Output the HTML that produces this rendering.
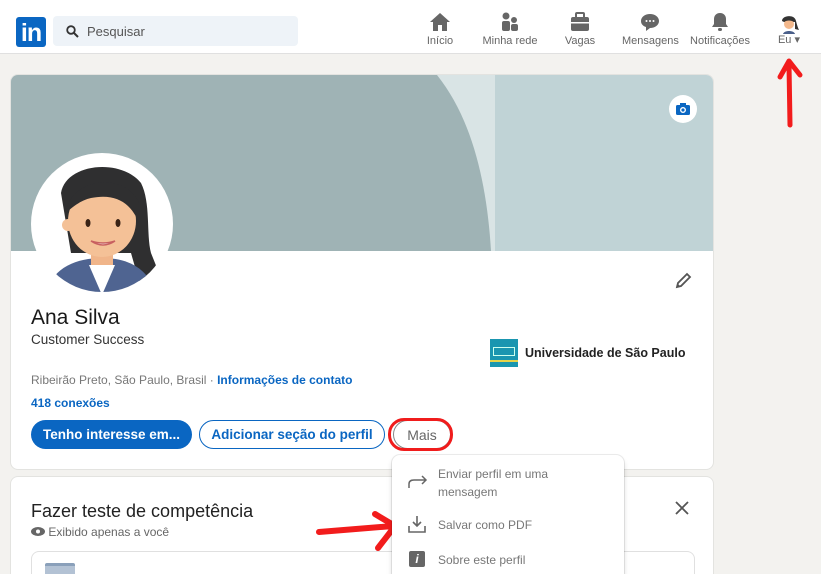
<!DOCTYPE html>
<html><head><meta charset="utf-8"><style>
*{box-sizing:border-box;margin:0;padding:0}
html,body{width:821px;height:574px;overflow:hidden}
body{background:#f3f2ef;font-family:"Liberation Sans",sans-serif;position:relative;color:#191919}
.hdr{position:absolute;left:0;top:0;width:821px;height:54px;background:#fff;border-bottom:1px solid #e0e0e0}
.logo{position:absolute;left:16px;top:17px;width:30px;height:30px;background:#0a66c2;border-radius:3px;color:#fff;font-weight:bold;font-size:25px;line-height:32px;text-align:center;letter-spacing:-1px}
.search{position:absolute;left:53px;top:16px;width:245px;height:30px;background:#eef3f8;border-radius:4px;font-size:13px;color:#555;padding-left:34px;line-height:31px}
.nav{position:absolute;top:12px;font-size:11px;color:#666;text-align:center;white-space:nowrap}
.nav svg{display:block;margin:0 auto 3px}
.card{position:absolute;left:10px;width:704px;background:#fff;border-radius:8px;border:1px solid #e3e3e0;overflow:hidden}
.btn{position:absolute;top:420px;height:29px;border-radius:15px;font-weight:bold;font-size:13.5px;display:flex;align-items:center;justify-content:center;white-space:nowrap}
.menu{position:absolute;left:392px;top:455px;width:232px;height:119px;background:#fff;border-radius:8px 8px 0 0;box-shadow:0 0 0 1px rgba(0,0,0,.08),0 4px 6px rgba(0,0,0,.15)}
.mi{position:absolute;left:46px;font-size:12px;color:#777;line-height:18px}
</style></head><body>
<div class="hdr">
<div class="logo">in</div>
<div class="search"><svg style="position:absolute;left:13px;top:9px" width="13" height="13" viewBox="0 0 13 13"><circle cx="5" cy="5" r="3.8" fill="none" stroke="#333" stroke-width="1.8"/><path d="M8 8l4 4" stroke="#333" stroke-width="2"/></svg>Pesquisar</div>
<div class="nav" style="left:422px;width:36px"><svg width="22" height="20" viewBox="0 0 22 20"><path d="M11 1L1 10h3v9h5v-6h4v6h5v-9h3z" fill="#666"/></svg>Início</div>
<div class="nav" style="left:480px;width:60px"><svg width="22" height="20" viewBox="0 0 22 20"><circle cx="7" cy="4" r="3.5" fill="#666"/><rect x="3" y="9" width="8" height="10" rx="2" fill="#666"/><circle cx="15" cy="8" r="3" fill="#666"/><rect x="12" y="12" width="7" height="7" rx="2" fill="#666"/></svg>Minha rede</div>
<div class="nav" style="left:562px;width:36px"><svg width="22" height="20" viewBox="0 0 22 20"><rect x="2" y="5" width="18" height="14" rx="2" fill="#666"/><rect x="7" y="1" width="8" height="5" rx="1" fill="none" stroke="#666" stroke-width="2"/><rect x="2" y="10" width="18" height="1.5" fill="#fff"/></svg>Vagas</div>
<div class="nav" style="left:622px;width:56px"><svg width="22" height="20" viewBox="0 0 22 20"><path d="M11 2c5 0 9 3 9 7s-4 7-9 7l-4 3v-4c-3-1-5-3-5-6 0-4 4-7 9-7z" fill="#666"/><circle cx="7.5" cy="9" r="1" fill="#fff"/><circle cx="11" cy="9" r="1" fill="#fff"/><circle cx="14.5" cy="9" r="1" fill="#fff"/></svg>Mensagens</div>
<div class="nav" style="left:690px;width:60px"><svg width="22" height="20" viewBox="0 0 22 20"><path d="M11 1c-4 0-6 3-6 6v5l-2 3h16l-2-3V7c0-3-2-6-6-6z" fill="#666"/><rect x="9" y="16" width="4" height="3" rx="1.5" fill="#666"/></svg>Notificações</div>
<div class="nav" style="left:774px;width:30px"><svg width="22" height="22" viewBox="0 0 22 22"><circle cx="11" cy="11" r="10" fill="#fff"/><path d="M4 9c0-6 13-7 14 0 1 4 2 7 3 9l-4-1V10H6z" fill="#333"/><circle cx="11" cy="12" r="5" fill="#f3b88c"/><path d="M6 10c1-4 9-5 10 0-3-2-7-2-10 0z" fill="#333"/><path d="M5 22c1-4 11-4 12 0z" fill="#4a5f8a"/></svg><span style="position:relative;top:-4px">Eu ▾</span></div>
</div>
<svg style="position:absolute;left:775px;top:55px" width="30" height="75" viewBox="0 0 30 75"><path d="M15 70L14 10M5 22L14 6 25 20" stroke="#f21c1c" stroke-width="5" fill="none" stroke-linecap="round" stroke-linejoin="round"/></svg>

<div class="card" style="top:74px;height:396px">
<svg style="position:absolute;left:0;top:0" width="704" height="176"><rect width="704" height="176" fill="#c0d3d6"/><rect width="484" height="176" fill="#d9e4e5"/><path d="M0 0H426C462 45 476 110 480 176H0z" fill="#9fb3b5"/></svg>
<div style="position:absolute;left:658px;top:20px;width:28px;height:28px;border-radius:50%;background:#fff"><svg style="position:absolute;left:7px;top:8px" width="14" height="12" viewBox="0 0 14 12"><rect x="0" y="2" width="14" height="10" rx="1.5" fill="#0a66c2"/><rect x="4" y="0" width="6" height="3" fill="#0a66c2"/><circle cx="7" cy="7" r="2.3" fill="none" stroke="#fff" stroke-width="1.4"/></svg></div>
<svg style="position:absolute;left:20px;top:78px" width="142" height="142" viewBox="0 0 142 142"><defs><clipPath id="c"><circle cx="71" cy="71" r="68"/></clipPath></defs><circle cx="71" cy="71" r="71" fill="#fff"/><g clip-path="url(#c)"><path d="M30 40C35 10 90 5 110 30 120 50 115 80 120 100L130 125 110 135 100 100H40z" fill="#2f2f30"/><path d="M15 142C20 115 45 105 71 105 97 105 118 115 125 142z" fill="#4f6491"/><rect x="60" y="95" width="22" height="20" fill="#f0b58a"/><path d="M58 112l13 30 13-30z" fill="#fff"/><ellipse cx="71" cy="68" rx="34" ry="36" fill="#f4c197"/><circle cx="37" cy="72" r="6" fill="#f4c197"/><path d="M35 60C38 25 95 18 108 50L108 70C100 50 85 40 60 45 50 47 40 55 35 60z" fill="#2f2f30"/><ellipse cx="57" cy="70" rx="2.5" ry="4" fill="#3a2316"/><ellipse cx="87" cy="70" rx="2.5" ry="4" fill="#3a2316"/><path d="M60 88q12 8 24 0q-12 4-24 0z" fill="#fff" stroke="#c86060" stroke-width="1.5"/></g></svg>
<svg style="position:absolute;left:662px;top:196px" width="20" height="20" viewBox="0 0 20 20"><path d="M4 16l1-4 9-9 3 3-9 9z" fill="none" stroke="#555" stroke-width="1.8"/><path d="M4 16l1-3 2 2z" fill="#555"/></svg>
<div style="position:absolute;left:20px;top:231px;font-size:21px">Ana Silva</div>
<div style="position:absolute;left:20px;top:257px;font-size:13.5px;color:#333">Customer Success</div>
<div style="position:absolute;left:20px;top:298px;font-size:12px;color:#777">Ribeirão Preto, São Paulo, Brasil · <b style="color:#0a66c2">Informações de contato</b></div>
<div style="position:absolute;left:20px;top:321px;font-size:12px;color:#0a66c2;font-weight:bold">418 conexões</div>
<div style="position:absolute;left:479px;top:264px;width:28px;height:28px;background:#1a96b0"><div style="position:absolute;left:3px;top:8px;width:22px;height:9px;border:1px solid #cfe;"></div><div style="position:absolute;left:0;top:21px;width:28px;height:2px;background:#e6d34a"></div></div>
<div style="position:absolute;left:514px;top:271px;font-size:12.5px;color:#222;font-weight:bold">Universidade de São Paulo</div>
</div>
<div class="btn" style="left:31px;width:161px;background:#0a66c2;color:#fff">Tenho interesse em...</div>
<div class="btn" style="left:199px;width:186px;border:1.5px solid #0a66c2;color:#0a66c2">Adicionar seção do perfil</div>
<div class="btn" style="left:393px;width:58px;border:1px solid #888;color:#666;font-weight:normal;font-size:14px">Mais</div>
<div style="position:absolute;left:388px;top:418px;width:65px;height:33px;border:3.5px solid #f01c1c;border-radius:16px"></div>

<div class="card" style="top:476px;height:98px;border-bottom:none;border-radius:8px 8px 0 0">
<div style="position:absolute;left:20px;top:24px;font-size:18px;color:#222">Fazer teste de competência</div>
<div style="position:absolute;left:20px;top:48px;font-size:12px;color:#666"><svg width="14" height="9" viewBox="0 0 14 9" style="vertical-align:0"><ellipse cx="7" cy="4.5" rx="7" ry="4.5" fill="#666"/><circle cx="7" cy="4.5" r="2" fill="#fff"/></svg> Exibido apenas a você</div>
<svg style="position:absolute;left:662px;top:22px" width="18" height="18"><path d="M3 3l12 12M15 3L3 15" stroke="#555" stroke-width="1.8"/></svg>
<div style="position:absolute;left:20px;top:74px;width:664px;height:30px;border:1px solid #e0e0e0;border-bottom:none;border-radius:8px 8px 0 0"></div>
<div style="position:absolute;left:34px;top:86px;width:30px;height:12px;background:#b3c2d4;border-radius:2px 2px 0 0;border-top:3px solid #8aa0ba"></div>
</div>
<svg style="position:absolute;left:315px;top:510px" width="85" height="45" viewBox="0 0 85 45"><path d="M4 22L78 16M60 4L80 16 63 38" stroke="#f21c1c" stroke-width="6" fill="none" stroke-linecap="round" stroke-linejoin="round"/></svg>

<div class="menu">
<svg style="position:absolute;left:16px;top:20px" width="20" height="14" viewBox="0 0 20 14"><path d="M1 13V9c0-3 2-4 5-4h12M14 1l4 4-4 4" fill="none" stroke="#666" stroke-width="1.5"/></svg>
<div class="mi" style="top:10px">Enviar perfil em uma<br>mensagem</div>
<svg style="position:absolute;left:16px;top:60px" width="18" height="18" viewBox="0 0 18 18"><path d="M9 1v10M5 7l4 4 4-4M1 11v6h16v-6" fill="none" stroke="#666" stroke-width="1.6"/></svg>
<div class="mi" style="top:61px">Salvar como PDF</div>
<div style="position:absolute;left:17px;top:96px;width:16px;height:16px;background:#666;border-radius:2px;color:#fff;font-size:12px;font-weight:bold;font-style:italic;text-align:center;line-height:16px">i</div>
<div class="mi" style="top:96px">Sobre este perfil</div>
</div>
</body></html>
